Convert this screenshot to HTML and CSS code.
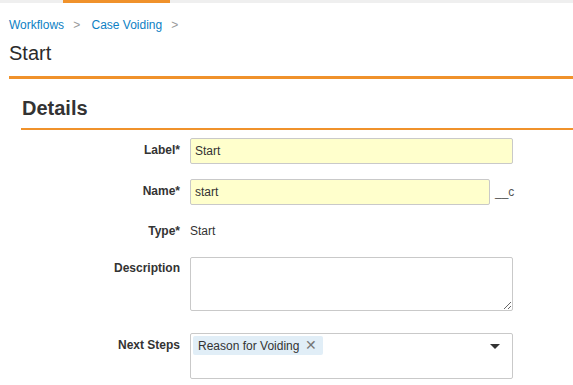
FILE: index.html
```html
<!DOCTYPE html>
<html lang="en">
<head>
  <meta charset="UTF-8" />
  <title>Start - Case Voiding</title>
  <link rel="stylesheet" href="styles.css">
</head>
<body>

  <!-- Top tab strip -->
  <div class="top-strip"><span class="active-tab"></span></div>

  <!-- Page header with breadcrumbs -->
  <div class="page-header">
    <div class="crumbs">
      <a href="#">Workflows</a><span class="sep">&gt;</span>
      <a href="#">Case Voiding</a><span class="sep">&gt;</span>
    </div>
    <h1>Start</h1>
  </div>

  <!-- Details section -->
  <div class="section">
    <h2>Details</h2>

    <form class="details-form">
      <div class="row row-label">
        <label for="labelInput">Label*</label>
        <div class="field"><input type="text" id="labelInput" class="req wide" value="Start"></div>
      </div>

      <div class="row row-name">
        <label for="nameInput">Name*</label>
        <div class="field"><input type="text" id="nameInput" class="req" value="start"><span class="suffix">__c</span></div>
      </div>

      <div class="row row-type">
        <label>Type*</label>
        <div class="field"><span class="plain">Start</span></div>
      </div>

      <div class="row row-desc">
        <label for="descInput">Description</label>
        <div class="field"><textarea id="descInput"></textarea></div>
      </div>

      <div class="row row-steps">
        <label>Next Steps</label>
        <div class="field">
          <div class="multi-select">
            <span class="tag">Reason for Voiding <span class="tag-x">&#x2715;</span></span>
            <span class="caret"></span>
          </div>
        </div>
      </div>
    </form>
  </div>

</body>
</html>
```

FILE: styles.css
```css
body {
  margin: 0;
  font-family: "Liberation Sans", Arial, sans-serif;
  color: #333;
  background: #fff;
}
/* Top tab strip */
.top-strip {
  height: 3px;
  background: #efefef;
}
.top-strip .active-tab {
  display: block;
  margin-left: 63px;
  width: 107px;
  height: 3px;
  background: #f0922b;
}
/* Header */
.page-header {
  margin-left: 9px;
  border-bottom: 3px solid #f0922b;
  padding-top: 14px;
}
.crumbs {
  font-size: 12px;
  line-height: 16px;
}
.crumbs a {
  color: #0d7fc4;
  text-decoration: none;
}
.crumbs .sep {
  color: #999;
  margin: 0 8px 0 9px;
}
h1 {
  margin: 0;
  font-size: 20px;
  font-weight: normal;
  line-height: 26px;
  padding: 7px 0 10px;
  color: #2b2b2b;
}
/* Details section */
.section {
  margin-left: 21px;
}
h2 {
  margin: 0;
  padding: 17px 0 8px 1px;
  font-size: 20px;
  line-height: 24px;
  border-bottom: 2px solid #f0922b;
  color: #333;
}
.details-form {
  padding-top: 8px;
}
.row {
  display: grid;
  grid-template-columns: 159px 1fr;
  column-gap: 10px;
}
.row label {
  text-align: right;
  font-size: 12px;
  font-weight: bold;
  line-height: 14px;
  padding-top: 5px;
  color: #333;
}
.row-name { margin-top: 15px; }
.row-type { margin-top: 13px; }
.row-desc { margin-top: 13px; }
.row-steps { margin-top: 22px; }
.row-type label { padding-top: 6px; }
.row-desc label { padding-top: 4px; }
.row-steps label { padding-top: 5px; }
.field {
  display: flex;
  align-items: center;
}
.row-desc .field, .row-steps .field {
  align-items: flex-start;
}
input[type="text"] {
  box-sizing: border-box;
  height: 26px;
  width: 300px;
  border: 1px solid #c9c9c9;
  border-radius: 2px;
  padding: 0 4px;
  font-family: inherit;
  font-size: 12px;
  color: #333;
  outline: none;
}
input.req {
  background: #ffffcc;
}
input.wide {
  width: 323px;
}
.suffix {
  margin-left: 5px;
  font-size: 12px;
  color: #555;
}
.plain {
  font-size: 12px;
  line-height: 26px;
  color: #333;
}
textarea {
  box-sizing: border-box;
  width: 323px;
  height: 54px;
  border: 1px solid #c9c9c9;
  border-radius: 2px;
  font-family: inherit;
  font-size: 12px;
  margin: 0;
}
.multi-select {
  box-sizing: border-box;
  width: 323px;
  height: 46px;
  border: 1px solid #c9c9c9;
  border-radius: 2px;
  padding: 2px;
  position: relative;
}
.tag {
  display: inline-block;
  background: #e1eef7;
  border-radius: 2px;
  font-size: 12px;
  line-height: 18px;
  padding: 0 6px 0 5px;
  color: #333;
}
.tag-x {
  color: #777;
  font-size: 14px;
  margin-left: 2px;
}
.caret {
  position: absolute;
  right: 12px;
  top: 10px;
  width: 0;
  height: 0;
  border-left: 5px solid transparent;
  border-right: 5px solid transparent;
  border-top: 5px solid #333;
}
```
